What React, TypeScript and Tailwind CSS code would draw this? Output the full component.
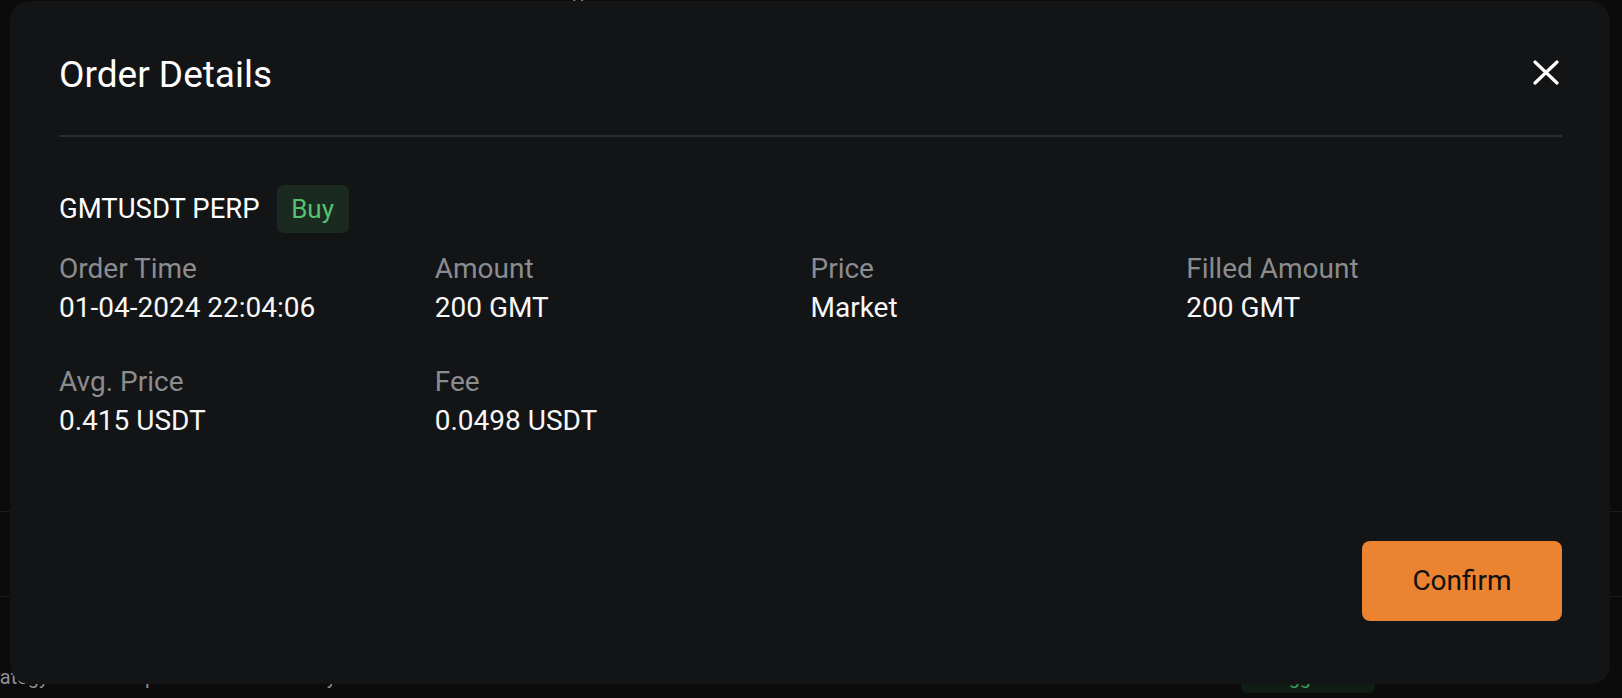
import React from "react";

const fields = [
  { label: "Order Time", value: "01-04-2024 22:04:06" },
  { label: "Amount", value: "200 GMT" },
  { label: "Price", value: "Market" },
  { label: "Filled Amount", value: "200 GMT" },
  { label: "Avg. Price", value: "0.415 USDT" },
  { label: "Fee", value: "0.0498 USDT" },
];

function CloseIcon() {
  return (
    <svg width="26" height="25" viewBox="0 0 26 25" fill="none" className="mt-[3px] mr-[3px]">
      <path d="M2 2L24 23M24 2L2 23" stroke="#ffffff" strokeWidth="3.2" strokeLinecap="round" />
    </svg>
  );
}

export default function App() {
  return (
    <div className="relative h-[698px] w-full overflow-hidden bg-[#0b0b0c] font-['Roboto',sans-serif]">
      {/* page underneath the dialog */}
      <div className="flex flex-col text-[20px] leading-[28px] text-[#8e8f93]">
        <div className="h-[512px] border-b border-[#1d1d20]">
          <div className="-mt-[22px] flex">
            <span className="ml-[59px] w-[127px]">Time</span>
            <span className="w-[373px]">Pair</span>
            <span className="w-[155px]">Type</span>
            <span className="w-[326px]">Side</span>
            <span className="w-[201px]">Amount</span>
            <span>Status</span>
          </div>
        </div>
        <div className="h-[85px] border-b border-[#1d1d20]" />
        <div className="mt-[63px] flex h-[33px] items-center">
          <span className="-ml-[25px] w-[158px]">Strategy</span>
          <span className="w-[160px]">Spot</span>
          <span className="w-[948px]">Daily</span>
          <span className="flex h-[33px] w-[134px] items-center justify-center rounded-[6px] bg-[#0f1d14] text-[#3f9a58]">
            Triggered
          </span>
        </div>
      </div>

      {/* dialog */}
      <div className="absolute left-[10px] top-[1px] flex h-[683px] w-[1600px] flex-col rounded-[20px] bg-[#131416] pl-[49px] pr-[48px] pb-[63px]">
        <div className="flex items-start justify-between border-b-2 border-[#2a2b2e] pt-[56px] pb-[42px]">
          <h2 className="text-[37px] leading-[36px] text-white">Order Details</h2>
          <CloseIcon />
        </div>

        <div className="mt-[48px] flex items-center gap-[17px]">
          <span className="text-[27.5px] leading-[30px] text-white">GMTUSDT PERP</span>
          <span className="flex h-[48px] w-[72px] items-center justify-center rounded-[7px] bg-[#1a2a20] text-[26px] text-[#55c16d]">
            Buy
          </span>
        </div>

        <div className="mt-[16px] grid grid-cols-4 gap-y-[35px]">
          {fields.map((f) => (
            <div key={f.label} className="flex flex-col text-[28px] leading-[39px]">
              <span className="text-[#8b8c90]">{f.label}</span>
              <span className="text-[#f7f7f7]">{f.value}</span>
            </div>
          ))}
        </div>

        <div className="flex-1" />

        <div className="flex justify-end">
          <button className="h-[80px] w-[200px] rounded-[8px] bg-[#ec8331] text-[28px] text-[#111111]">
            Confirm
          </button>
        </div>
      </div>
    </div>
  );
}
